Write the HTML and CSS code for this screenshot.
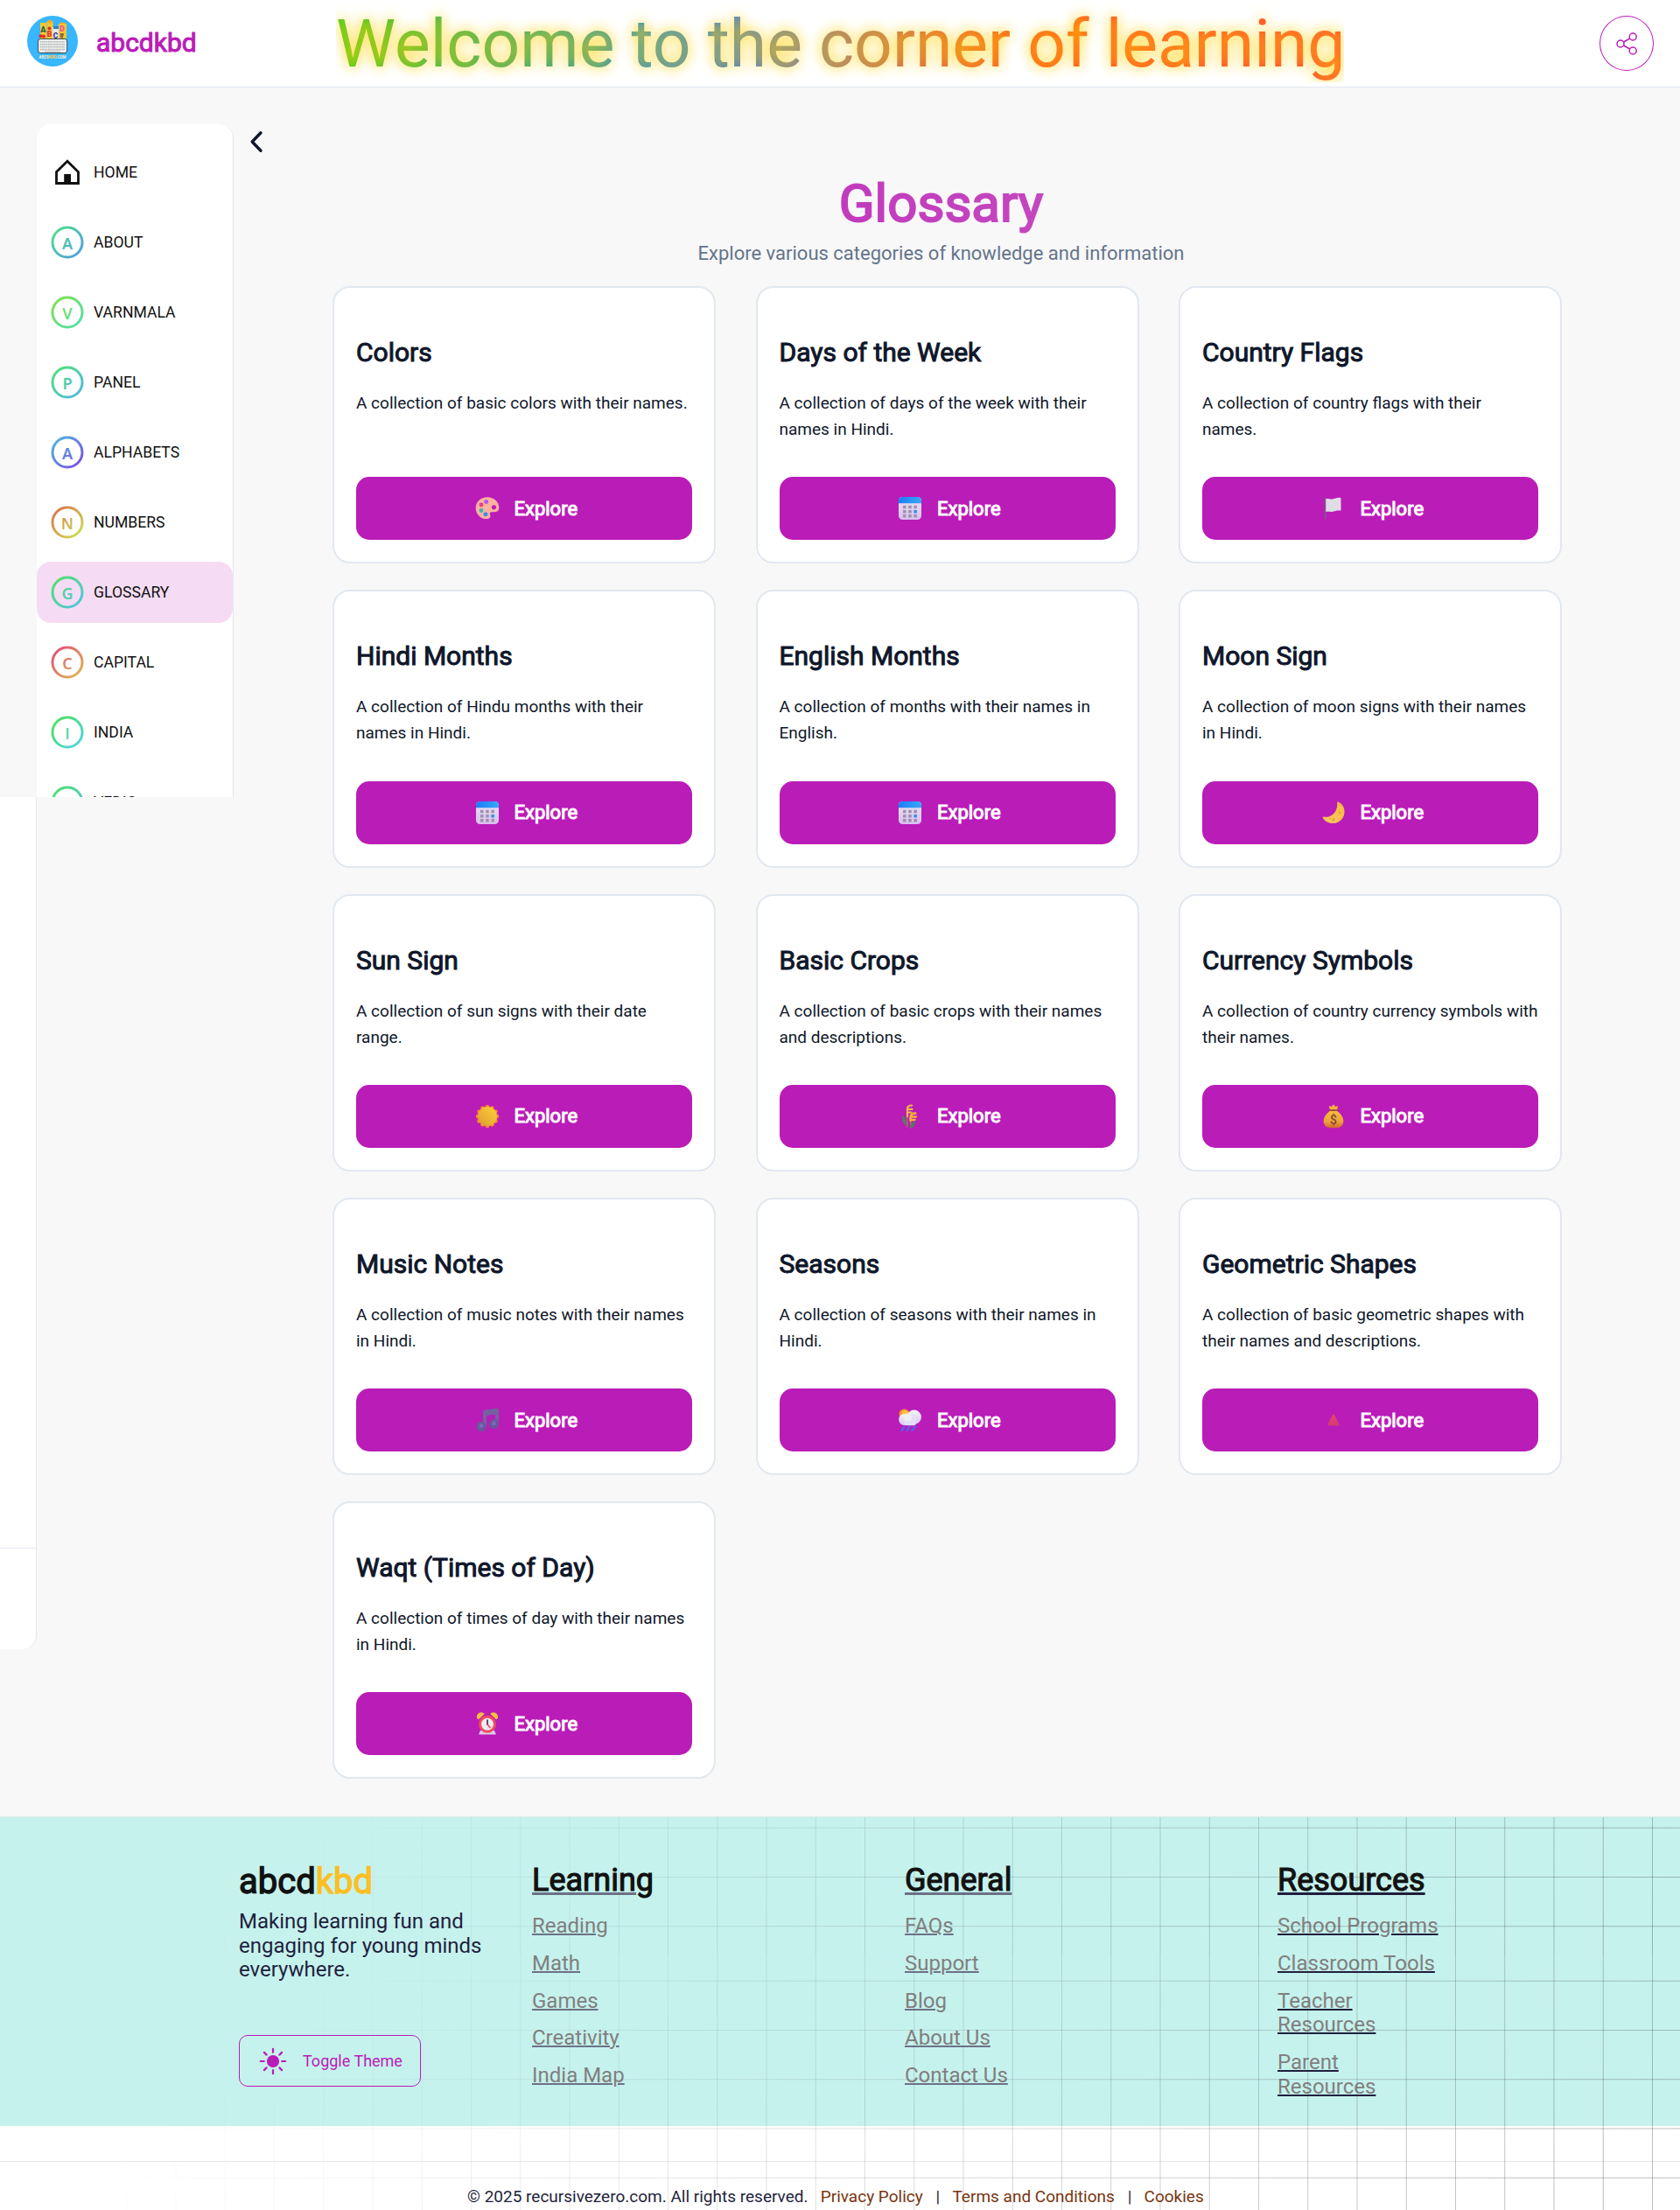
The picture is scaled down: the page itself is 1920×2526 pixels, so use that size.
FILE: index.html
```html
<!DOCTYPE html>
<html lang="en">
<head>
<meta charset="utf-8">
<title>abcdkbd - Glossary</title>
<link rel="stylesheet" href="styles.css">
</head>
<body>
<svg class="sprite" width="0" height="0" aria-hidden="true">
  <defs>
    <linearGradient id="g-about" gradientUnits="userSpaceOnUse" x1="4" y1="4" x2="34" y2="34"><stop offset="0" stop-color="#50e08c"/><stop offset="1" stop-color="#509ce0"/></linearGradient>
    <linearGradient id="g-varn" gradientUnits="userSpaceOnUse" x1="4" y1="4" x2="34" y2="34"><stop offset="0" stop-color="#82e04f"/><stop offset="1" stop-color="#50e0a8"/></linearGradient>
    <linearGradient id="g-panel" gradientUnits="userSpaceOnUse" x1="4" y1="4" x2="34" y2="34"><stop offset="0" stop-color="#50e078"/><stop offset="1" stop-color="#50b8e0"/></linearGradient>
    <linearGradient id="g-alpha" gradientUnits="userSpaceOnUse" x1="4" y1="4" x2="34" y2="34"><stop offset="0" stop-color="#50b4e0"/><stop offset="1" stop-color="#7850e0"/></linearGradient>
    <linearGradient id="g-num" gradientUnits="userSpaceOnUse" x1="4" y1="4" x2="34" y2="34"><stop offset="0" stop-color="#e07350"/><stop offset="1" stop-color="#c8e050"/></linearGradient>
    <linearGradient id="g-glos" gradientUnits="userSpaceOnUse" x1="4" y1="4" x2="34" y2="34"><stop offset="0" stop-color="#50e06c"/><stop offset="1" stop-color="#50c4e0"/></linearGradient>
    <linearGradient id="g-cap" gradientUnits="userSpaceOnUse" x1="4" y1="4" x2="34" y2="34"><stop offset="0" stop-color="#e05078"/><stop offset="1" stop-color="#e0b450"/></linearGradient>
    <linearGradient id="g-india" gradientUnits="userSpaceOnUse" x1="4" y1="4" x2="34" y2="34"><stop offset="0" stop-color="#50e060"/><stop offset="1" stop-color="#50d4e0"/></linearGradient>
    <linearGradient id="e-cal" x1="0" y1="0" x2="1" y2="0"><stop offset="0" stop-color="#1c7df5"/><stop offset="1" stop-color="#38a8fb"/></linearGradient>
    <linearGradient id="e-sheet" x1="0" y1="0" x2="0" y2="1"><stop offset="0" stop-color="#e6e4ee"/><stop offset="1" stop-color="#d9bfee"/></linearGradient>
    <linearGradient id="e-moon" x1="1" y1="0" x2="0" y2="1"><stop offset="0" stop-color="#f9b93f"/><stop offset="1" stop-color="#fbc766"/></linearGradient>
    <linearGradient id="e-sun" x1="1" y1="0" x2="0" y2="1"><stop offset="0" stop-color="#ffd23a"/><stop offset="1" stop-color="#dc9a2e"/></linearGradient>
    <linearGradient id="e-bag" x1="0" y1="0" x2="0" y2="1"><stop offset="0" stop-color="#f8bf3c"/><stop offset=".65" stop-color="#efa23a"/><stop offset="1" stop-color="#d4642f"/></linearGradient>
    <linearGradient id="e-cloud" x1="0" y1="0" x2="0" y2="1"><stop offset="0" stop-color="#f4f4f6"/><stop offset="1" stop-color="#d5c8f3"/></linearGradient>
    <linearGradient id="e-tri" x1="0" y1="0" x2="0" y2="1"><stop offset="0" stop-color="#e8466c"/><stop offset="1" stop-color="#d23a72"/></linearGradient>

    <symbol id="palette" viewBox="0 0 28 28">
      <path d="M14 1.300C6.800 1.300.7 6.400.7 13.400c0 6.600 5 12.700 12.500 12.700 2.600 0 4.400-1 4.300-3.100 0-1.300-.9-2-.7-3.300.3-1.300 1.500-1.500 3.200-1.500h2.800c2.600 0 4.500-1.600 4.500-4.600C27.300 6.300 21.300 1.300 14 1.300Zm7.500 9c1.600 0 2.700 1 2.700 2.500s-1.100 2.600-2.700 2.600-2.700-1.100-2.700-2.600 1.100-2.500 2.700-2.500Z" fill="#fdb3a0" fill-rule="evenodd"/>
      <circle cx="12.700" cy="6.400" r="2.500" fill="#b35bea"/><circle cx="7" cy="10" r="2.400" fill="#ef3c8a"/><circle cx="7" cy="16.500" r="2.400" fill="#3fb5b5"/><circle cx="12" cy="20.700" r="2.500" fill="#3c8ef0"/>
    </symbol>
    <symbol id="calendar" viewBox="0 0 28 28">
      <rect x="1" y="1" width="26" height="26" rx="4.500" fill="url(#e-sheet)"/>
      <path d="M1 8.200V5.200C1 2.600 2.900 1 5.300 1h17.400C25.100 1 27 2.600 27 5.200v3Z" fill="url(#e-cal)"/>
      <g fill="#9d8fb0"><rect x="6" y="10.800" width="3.500" height="3.500" rx=".6"/><rect x="12.200" y="10.800" width="3.500" height="3.500" rx=".6"/><rect x="18.400" y="10.800" width="3.500" height="3.500" rx=".6"/><rect x="6" y="15.900" width="3.500" height="3.500" rx=".6"/><rect x="12.200" y="15.900" width="3.500" height="3.500" rx=".6"/><rect x="6" y="21" width="3.500" height="3.500" rx=".6"/><rect x="12.200" y="21" width="3.500" height="3.500" rx=".6"/><rect x="18.400" y="21" width="3.500" height="3.500" rx=".6"/></g>
      <rect x="18.400" y="15.900" width="3.500" height="3.500" rx=".6" fill="#2d8cf5"/>
    </symbol>
    <symbol id="flag" viewBox="0 0 28 28">
      <path d="M5 3.200c3-1 5 .8 8 .2 3-.7 5-2 8-1.700.8.100 1.500.4 1.500 1.200v12.900c0 .8-.8 1-1.600.8-2.600-.5-4.800.6-7.400 1.100-3 .6-5.500-.6-8.500.4Z" fill="#e0dde6"/>
      <path d="M3.800 1.500h1.500v25H3.800Z" fill="#76617f"/>
    </symbol>
    <symbol id="moon" viewBox="0 0 28 28">
      <path d="M19.500 1.500c4.500 2.300 7 6 7 11 0 7.500-5.500 13.500-13 13.500-5 0-9.300-2.300-11.700-6.300-.4-.8.1-1.400 1-1.200 2.200.6 4.500.4 7-.6 5.800-2.400 9-8 8.500-15.400 0-.8.5-1.300 1.200-1Z" fill="url(#e-moon)"/>
      <circle cx="21" cy="14" r="1.300" fill="#e5a03f"/><circle cx="14" cy="22" r="1.500" fill="#e5a03f"/><circle cx="10" cy="20.500" r=".9" fill="#e5a03f"/>
    </symbol>
    <symbol id="sun" viewBox="0 0 28 28">
      <g fill="#f8882f"><circle cx="14" cy="3.200" r="2.400"/><circle cx="19.400" cy="4.650" r="2.400"/><circle cx="23.350" cy="8.600" r="2.400"/><circle cx="24.800" cy="14" r="2.400"/><circle cx="23.350" cy="19.400" r="2.400"/><circle cx="19.400" cy="23.350" r="2.400"/><circle cx="14" cy="24.800" r="2.400"/><circle cx="8.600" cy="23.350" r="2.400"/><circle cx="4.650" cy="19.400" r="2.400"/><circle cx="3.200" cy="14" r="2.400"/><circle cx="4.650" cy="8.600" r="2.400"/><circle cx="8.600" cy="4.650" r="2.400"/></g>
      <circle cx="14" cy="14" r="11" fill="url(#e-sun)"/>
    </symbol>
    <symbol id="wheat" viewBox="0 0 28 28">
      <g fill="none" stroke-linecap="round">
        <path d="M10.800 26V10M15 27V15" stroke="#a0705c" stroke-width="1.600"/>
        <path d="M11 14V5q0-3.500 5-3.500M11.500 5.800h5M11.500 9.500h4" stroke="#f4bd45" stroke-width="2.200"/>
        <path d="M14.500 19v-4q0-4.500 6-4.500M15 14.500h6M15 18h4.500" stroke="#f8b33a" stroke-width="2.300"/>
      </g>
      <path d="M5.200 12.500c3 1.500 4.500 5.500 4.200 12-3-2-4.800-6-4.200-12Z" fill="#47865c"/><path d="M19.500 19c.8 4.500-.8 7.500-4.800 8.500-.3-4 1.400-7 4.800-8.500Z" fill="#4a7d62"/>
    </symbol>
    <symbol id="money" viewBox="0 0 28 28">
      <path d="M10.200 7 9 3.500c-.3-1.300.7-1.700 1.600-1.100l1.200.6L13 1.200c.6-.8 1.400-.8 2 0L16.200 3l1.200-.6c.9-.6 1.900-.2 1.600 1.100L17.800 7Z" fill="#f6b23a"/>
      <path d="M11 7h6c4.700 3.300 8.300 7.400 8.300 12.300 0 5.200-3.300 7.900-8 7.900h-6.600c-4.700 0-8-2.700-8-7.900C2.700 14.400 6.300 10.300 11 7Z" fill="url(#e-bag)"/>
      <path d="M10.200 7h7.600" stroke="#9a5340" stroke-width="2" stroke-linecap="round"/>
      <text x="14" y="22.500" text-anchor="middle" font-family="Roboto, sans-serif" font-size="14" font-weight="500" fill="#7d4836">$</text>
    </symbol>
    <symbol id="notes" viewBox="0 0 28 28">
      <path d="M9 5.300c0-1.500.8-2.400 2.200-2.600l14-1.900c1-.1 1.800.5 1.800 1.500V18h-4V7.500l-10 1.400V22H9Z" fill="#74629f"/>
      <circle cx="7" cy="21.500" r="5.600" fill="#69569d"/><circle cx="21.500" cy="18.500" r="5.500" fill="#69569d"/><circle cx="7" cy="20.500" r="2.500" fill="#7a6bb5"/><circle cx="21.500" cy="18" r="2.500" fill="#7a6bb5"/>
    </symbol>
    <symbol id="cloud" viewBox="0 0 28 28">
      <circle cx="7.500" cy="7.500" r="6" fill="#f8952c"/><circle cx="8.500" cy="7" r="4" fill="#fcc33a"/>
      <circle cx="7.800" cy="13.500" r="6.600" fill="url(#e-cloud)"/><circle cx="18.700" cy="10.800" r="8.200" fill="url(#e-cloud)"/><rect x="7" y="11" width="14" height="9.200" rx="3" fill="#e4dff4"/><circle cx="11.500" cy="11" r="4.500" fill="#f0eff4"/>
      <path d="M7.500 21.500 4.500 26M13.500 21.500 10.500 26M19.500 21.500 16.500 26" stroke="#4a6bf0" stroke-width="2.200" stroke-linecap="round"/>
    </symbol>
    <symbol id="triangle" viewBox="0 0 28 28">
      <path d="M13.300 8q.7-1 1.400 0l6 11q.5 1.200-.8 1.400H8.100q-1.300-.2-.8-1.400Z" fill="url(#e-tri)"/>
    </symbol>
    <symbol id="clock" viewBox="0 0 28 28">
      <path d="M2 8C1.500 4 3.500 1.300 7 1.200c1.800 0 3 .8 3.700 1.800L4 9.200ZM26 8c.5-4-1.500-6.700-5-6.800-1.800 0-3 .8-3.700 1.800L24 9.200Z" fill="#f7c03e"/>
      <path d="M6 22 4 26.500h20L22 22Z" fill="#dccbe4"/>
      <circle cx="14" cy="14.800" r="10" fill="#f04a5e"/><circle cx="14" cy="14.800" r="7" fill="#f1eaf3"/>
      <path d="M14 10v5" stroke="#44364f" stroke-width="1.700" stroke-linecap="round"/><path d="m14.500 15.500 2.500 3" stroke="#ee4a62" stroke-width="1.800" stroke-linecap="round"/>
    </symbol>
  </defs>
</svg>

<header class="topbar">
  <a class="brand">
    <svg class="logo" viewBox="0 0 58 58">
      <circle cx="29" cy="29" r="29" fill="#38b6ff"/>
      <path d="M15 8h7v18h-7zM22.500 6.500h7V26h-7zM36 9h9v17h-9z" fill="#fbc62f"/>
      <path d="M29 13h7v13h-7z" fill="#d7ecf8"/><path d="M30 12h6v3h-6z" fill="#2c7fc4"/>
      <path d="M24 5.500q2-1.800 4 0v3h-4zM38 7.500h5v2h-5z" fill="#f5a623"/>
      <g font-family="Roboto, sans-serif" font-weight="900" text-anchor="middle">
        <text x="18.200" y="18.500" font-size="9" fill="#17624a">A</text><text x="25.400" y="23.500" font-size="8.500" fill="#e32b33">B</text><text x="32.600" y="25.500" font-size="8.500" fill="#4b2a86">C</text><text x="40" y="17.500" font-size="9" fill="#ee4fa0">D</text>
      </g>
      <circle cx="25.500" cy="14.500" r="2" fill="#d3322c"/><circle cx="15.500" cy="23.300" r="2" fill="#e0262d"/><circle cx="19" cy="23.600" r="2" fill="#e0262d"/>
      <path d="M37.500 20h4.500l-1 5.500h-3Z" fill="#8a6a4a"/>
      <rect x="12.600" y="26.500" width="33" height="16" rx="2.500" fill="#f4f4f2" stroke="#43464c" stroke-width="1"/>
      <path d="M14.800 29.700h28.600M14.800 32.700h28.600M14.800 35.700h28.600M14.800 38.700h28.600" stroke="#b3b5b8" stroke-width="1.800" stroke-dasharray="1.700 .6"/>
      <path d="M20 41h18" stroke="#b3b5b8"/>
      <text x="29" y="49.200" text-anchor="middle" font-family="Roboto, sans-serif" font-size="5" font-weight="900" textLength="31" lengthAdjust="spacingAndGlyphs" fill="#efe9d0">ABCD<tspan fill="#f6c945">KBD</tspan>.COM</text>
    </svg>
    <span class="brand-name">abcdkbd</span>
  </a>
  <div class="headline"><span class="headline-text">Welcome to the corner of learning</span></div>
  <button class="share" aria-label="Share">
    <svg width="26" height="28" viewBox="0 0 26 28" fill="none" stroke="#ba1cb8" stroke-width="1.500"><circle cx="6" cy="14" r="4"/><circle cx="20.200" cy="6" r="4"/><circle cx="20.200" cy="22" r="4"/><path d="m9.500 12 7.200-4M9.500 16l7.200 4"/></svg>
  </button>
</header>

<main class="main">
  <div class="rail"><div class="rail-body"></div><div class="rail-foot"></div></div>
  <nav class="sidebar">
    <a class="item"><svg class="badge" viewBox="0 0 38 38"><path d="M6.500 18.500 19 6.300l12.500 12.200V31.500h-25Z" fill="none" stroke="#111" stroke-width="2.800" stroke-linejoin="miter"/><path d="M15.200 21h7.800v11h-7.800Z" fill="#111"/></svg><span>HOME</span></a>
    <a class="item"><svg class="badge" viewBox="0 0 38 38"><circle cx="19" cy="19" r="17" fill="none" stroke="url(#g-about)" stroke-width="3"/><text class="letter" x="19" y="27" fill="url(#g-about)">A</text></svg><span>ABOUT</span></a>
    <a class="item"><svg class="badge" viewBox="0 0 38 38"><circle cx="19" cy="19" r="17" fill="none" stroke="url(#g-varn)" stroke-width="3"/><text class="letter" x="19" y="27" fill="url(#g-varn)">V</text></svg><span>VARNMALA</span></a>
    <a class="item"><svg class="badge" viewBox="0 0 38 38"><circle cx="19" cy="19" r="17" fill="none" stroke="url(#g-panel)" stroke-width="3"/><text class="letter" x="19" y="27" fill="url(#g-panel)">P</text></svg><span>PANEL</span></a>
    <a class="item"><svg class="badge" viewBox="0 0 38 38"><circle cx="19" cy="19" r="17" fill="none" stroke="url(#g-alpha)" stroke-width="3"/><text class="letter" x="19" y="27" fill="url(#g-alpha)">A</text></svg><span>ALPHABETS</span></a>
    <a class="item"><svg class="badge" viewBox="0 0 38 38"><circle cx="19" cy="19" r="17" fill="none" stroke="url(#g-num)" stroke-width="3"/><text class="letter" x="19" y="27" fill="url(#g-num)">N</text></svg><span>NUMBERS</span></a>
    <a class="item active"><svg class="badge" viewBox="0 0 38 38"><circle cx="19" cy="19" r="17" fill="none" stroke="url(#g-glos)" stroke-width="3"/><text class="letter" x="19" y="27" fill="url(#g-glos)">G</text></svg><span>GLOSSARY</span></a>
    <a class="item"><svg class="badge" viewBox="0 0 38 38"><circle cx="19" cy="19" r="17" fill="none" stroke="url(#g-cap)" stroke-width="3"/><text class="letter" x="19" y="27" fill="url(#g-cap)">C</text></svg><span>CAPITAL</span></a>
    <a class="item"><svg class="badge" viewBox="0 0 38 38"><circle cx="19" cy="19" r="17" fill="none" stroke="url(#g-india)" stroke-width="3"/><text class="letter letter-bar" x="19" y="27" fill="url(#g-india)">I</text></svg><span>INDIA</span></a>
    <a class="item"><svg class="badge" viewBox="0 0 38 38"><circle cx="19" cy="19" r="17" fill="none" stroke="url(#g-glos)" stroke-width="3"/></svg><span>VEDIC</span></a>
  </nav>
  <button class="collapse" aria-label="Collapse sidebar"><svg width="16" height="26" viewBox="0 0 16 26" fill="none" stroke="#0f172a" stroke-width="3.400" stroke-linecap="round" stroke-linejoin="round"><path d="M13 2.800 3.200 13 13 23.200"/></svg></button>
  <section class="content">
    <div class="heading">
      <h1 class="title">Glossary</h1>
      <p class="subtitle">Explore various categories of knowledge and information</p>
    </div>
    <div class="cards">
      <article class="card"><h2>Colors</h2><p>A collection of basic colors with their names.</p><a class="explore"><svg class="emoji"><use href="#palette"/></svg>Explore</a></article>
      <article class="card"><h2>Days of the Week</h2><p>A collection of days of the week with their names in Hindi.</p><a class="explore"><svg class="emoji"><use href="#calendar"/></svg>Explore</a></article>
      <article class="card"><h2>Country Flags</h2><p>A collection of country flags with their names.</p><a class="explore"><svg class="emoji"><use href="#flag"/></svg>Explore</a></article>
      <article class="card"><h2>Hindi Months</h2><p>A collection of Hindu months with their names in Hindi.</p><a class="explore"><svg class="emoji"><use href="#calendar"/></svg>Explore</a></article>
      <article class="card"><h2>English Months</h2><p>A collection of months with their names in English.</p><a class="explore"><svg class="emoji"><use href="#calendar"/></svg>Explore</a></article>
      <article class="card"><h2>Moon Sign</h2><p>A collection of moon signs with their names in Hindi.</p><a class="explore"><svg class="emoji"><use href="#moon"/></svg>Explore</a></article>
      <article class="card"><h2>Sun Sign</h2><p>A collection of sun signs with their date range.</p><a class="explore"><svg class="emoji"><use href="#sun"/></svg>Explore</a></article>
      <article class="card"><h2>Basic Crops</h2><p>A collection of basic crops with their names and descriptions.</p><a class="explore"><svg class="emoji"><use href="#wheat"/></svg>Explore</a></article>
      <article class="card"><h2>Currency Symbols</h2><p>A collection of country currency symbols with their names.</p><a class="explore"><svg class="emoji"><use href="#money"/></svg>Explore</a></article>
      <article class="card"><h2>Music Notes</h2><p>A collection of music notes with their names in Hindi.</p><a class="explore"><svg class="emoji"><use href="#notes"/></svg>Explore</a></article>
      <article class="card"><h2>Seasons</h2><p>A collection of seasons with their names in Hindi.</p><a class="explore"><svg class="emoji"><use href="#cloud"/></svg>Explore</a></article>
      <article class="card"><h2>Geometric Shapes</h2><p>A collection of basic geometric shapes with their names and descriptions.</p><a class="explore"><svg class="emoji"><use href="#triangle"/></svg>Explore</a></article>
      <article class="card"><h2>Waqt (Times of Day)</h2><p>A collection of times of day with their names in Hindi.</p><a class="explore"><svg class="emoji"><use href="#clock"/></svg>Explore</a></article>
    </div>
  </section>
</main>

<footer class="footer">
  <div class="footer-main">
    <div class="about">
      <div class="footer-brand">abcd<span>kbd</span></div>
      <p class="tagline">Making learning fun and engaging for young minds everywhere.</p>
      <button class="toggle"><svg width="32" height="32" viewBox="0 0 32 32" stroke="#ba1cb8" stroke-width="2.200" stroke-linecap="round"><circle cx="16" cy="16" r="6" fill="#ba1cb8"/><path d="M16 1.800v4M16 26.200v4M1.800 16h4M26.200 16h4M5.900 5.900l2.700 2.700M23.400 23.400l2.700 2.700M5.900 26.100l2.700-2.700M23.400 8.600l2.700-2.700"/></svg>Toggle Theme</button>
    </div>
    <div class="column"><h3>Learning</h3><ul><li>Reading</li><li>Math</li><li>Games</li><li>Creativity</li><li>India Map</li></ul></div>
    <div class="column"><h3>General</h3><ul><li>FAQs</li><li>Support</li><li>Blog</li><li>About Us</li><li>Contact Us</li></ul></div>
    <div class="column column-dark"><h3>Resources</h3><ul><li>School Programs</li><li>Classroom Tools</li><li>Teacher Resources</li><li>Parent Resources</li></ul></div>
  </div>
  <div class="legal">
    <span>© 2025 recursivezero.com. All rights reserved.</span><a>Privacy Policy</a><i>|</i><a>Terms and Conditions</a><i>|</i><a>Cookies</a>
  </div>
  <div class="mesh mesh-top"></div>
  <div class="mesh mesh-bottom"></div>
</footer>
</body>
</html>
```
FILE: styles.css
```css
* { box-sizing: border-box; }
html { overflow: hidden; }
body {
  margin: 0;
  width: 1920px;
  height: 2526px;
  overflow: hidden;
  background: #f8f8f8;
  font-family: Roboto, "Noto Sans", sans-serif;
  font-weight: 400;
  color: #0f172a;
}
h1, h2, h3, p, ul { margin: 0; padding: 0; font-weight: 400; }
button { background: none; border: 0; padding: 0; font: inherit; }
.sprite { position: absolute; }

/* top bar */
.topbar {
  display: grid;
  grid-template-columns: 384px 1152px 384px;
  height: 100px;
  background: #fff;
  border-bottom: 1px solid #e2e8f0;
}
.brand { display: flex; align-items: flex-start; padding: 18px 0 0 31px; }
.logo { width: 58px; height: 58px; }
.brand-name {
  margin: 13px 0 0 21px;
  font-size: 30px;
  line-height: 36px;
  color: #ba1cb8;
  -webkit-text-stroke: 1px #ba1cb8;
}
.headline { padding-top: 5px; overflow: hidden; height: 94px; }
.headline-text {
  display: block;
  height: 90px;
  font-size: 76.8px;
  line-height: 90px;
  white-space: nowrap;
  background: linear-gradient(90deg, #3fcc20 0%, #3fb850 10%, #2ea58c 22%, #2f92c8 31%, #4a80cc 40%, #8080a0 46%, #b07470 52%, #e06440 60%, #ff5a20 68%, #ff4838 100%);
  -webkit-background-clip: text;
  background-clip: text;
  color: transparent;
  text-shadow: 0 0 16px rgba(255, 208, 0, 1);
}
.share {
  justify-self: end;
  display: flex;
  align-items: center;
  justify-content: center;
  width: 62px;
  height: 63px;
  margin: 18px 30px 0 0;
  border: 1px solid #ba1cb8;
  border-radius: 50%;
}

/* page body */
.main {
  display: grid;
  grid-template-columns: 42px 225px 113px 1406px;
  height: 1976px;
}
.rail { padding-top: 811px; }
.rail-body, .rail-foot { background: #fff; border-right: 1px solid #e2e8f0; }
.rail-body { height: 858px; }
.rail-foot { height: 116px; border-top: 1px solid #e2e8f0; border-bottom-right-radius: 16px; }
.sidebar {
  display: flex;
  flex-direction: column;
  gap: 10px;
  height: 769px;
  margin-top: 42px;
  padding-top: 20px;
  overflow: hidden;
  background: #fff;
  border-right: 1px solid #e2e8f0;
  border-radius: 16px 16px 0 0;
}
.item {
  flex: none;
  display: flex;
  align-items: center;
  gap: 11px;
  height: 70px;
  padding-left: 16px;
  border-radius: 16px;
  font-size: 17.600px;
  line-height: 22px;
  color: #111;
}
.item.active { background: #f5dcf4; }
.badge { width: 38px; height: 38px; }
.letter { font: 600 18px "Noto Sans", sans-serif; text-anchor: middle; }
.letter-bar { font-family: "Open Sans", sans-serif; }
.collapse { align-self: start; justify-self: start; height: 26px; margin: 49px 0 0 18px; }
.collapse svg { display: block; }

.content { padding-top: 94.500px; }
.heading { width: 1391px; height: 132.700px; text-align: center; }
.title {
  font-size: 60px;
  line-height: 75px;
  background: linear-gradient(90deg, #ba1cb8 0%, #cb66c4 100%);
  -webkit-background-clip: text;
  background-clip: text;
  color: transparent;
  -webkit-text-stroke: 2px transparent;
}
.subtitle { margin-top: 4.500px; font-size: 22px; line-height: 32px; color: #64748b; }
.cards {
  display: grid;
  grid-template-columns: repeat(3, 438px);
  grid-auto-rows: 317.100px;
  gap: 30.200px 45.500px;
}
.card {
  display: flex;
  flex-direction: column;
  padding: 56px 25px 25px;
  background: #fff;
  border: 2px solid #e2e8f0;
  border-radius: 20px;
}
.card h2 { font-size: 30px; line-height: 36px; -webkit-text-stroke: 1px #0f172a; }
.card p { margin-top: 25px; font-size: 19px; line-height: 30px; }
.explore {
  display: flex;
  align-items: center;
  gap: 17px;
  height: 72px;
  margin-top: auto;
  padding-left: 135.500px;
  border-radius: 15px;
  background: #ba1cb8;
  color: #fff;
  font-size: 22px;
  -webkit-text-stroke: 1px #fff;
}
.emoji { width: 28px; height: 28px; -webkit-text-stroke: 0; }

/* footer */
.footer {
  position: relative;
  height: 450px;
  overflow: hidden;
  background: #fff;
  border-top: 1px solid #dcebe9;
  color: #1f1f3d;
}
.footer-main {
  display: grid;
  grid-template-columns: 335px 426px 426px 185px;
  height: 353px;
  padding: 44.500px 0 0 273px;
  background: #c6f2ed;
}
/* grid lines that fade out towards the left */
.mesh {
  position: absolute;
  left: 0;
  right: 0;
  pointer-events: none;
  background-image:
    linear-gradient(90deg, rgba(60, 60, 60, .36) 1px, transparent 1px),
    linear-gradient(rgba(60, 60, 60, .36) 1px, transparent 1px);
  background-size: 56.25px 56.25px;
  -webkit-mask-image: linear-gradient(135deg, transparent 17%, #000 100%);
  mask-image: linear-gradient(135deg, transparent 17%, #000 100%);
}
.mesh-top { top: 0; height: 157px; background-position: 31.750px 11.750px; }
.mesh-bottom { top: 157px; height: 293px; background-position: 31.750px 29.750px; }
.footer-brand {
  height: 48px;
  font-size: 40px;
  line-height: 57px;
  color: #111;
  -webkit-text-stroke: 1.300px;
}
.footer-brand span { color: #fbbf24; }
.tagline { width: 290px; margin-top: 13.500px; font-size: 24px; line-height: 27.700px; }
.toggle {
  display: flex;
  align-items: center;
  gap: 18px;
  width: 208px;
  height: 59px;
  margin-top: 60px;
  padding-left: 22px;
  border: 1.500px solid #ba1cb8;
  border-radius: 10px;
  color: #ba1cb8;
  font-size: 18px;
  line-height: 24px;
}
.toggle svg { margin-top: 1px; }
.column { color: #6b7285; }
.column h3 {
  font-size: 36px;
  line-height: 54px;
  color: #111;
  -webkit-text-stroke: 1.100px #111;
  text-decoration: underline 3px #6b7285;
}
.column ul { list-style: none; display: flex; flex-direction: column; gap: 15.100px; margin-top: 12.500px; }
.column li { font-size: 24px; line-height: 27.700px; color: #808080; text-decoration: underline 2px #6b7285; }
.column-dark h3, .column-dark li { text-decoration-color: #1f1f3d; }
.legal {
  display: flex;
  height: 60px;
  margin-top: 40px;
  padding: 24px 0 0 534px;
  border-top: 1px solid #e5e7eb;
  font-size: 19px;
  line-height: 32px;
}
.legal a { color: #78350f; margin-left: 14.300px; }
.legal i { font-style: normal; margin-left: 14.800px; }
```
